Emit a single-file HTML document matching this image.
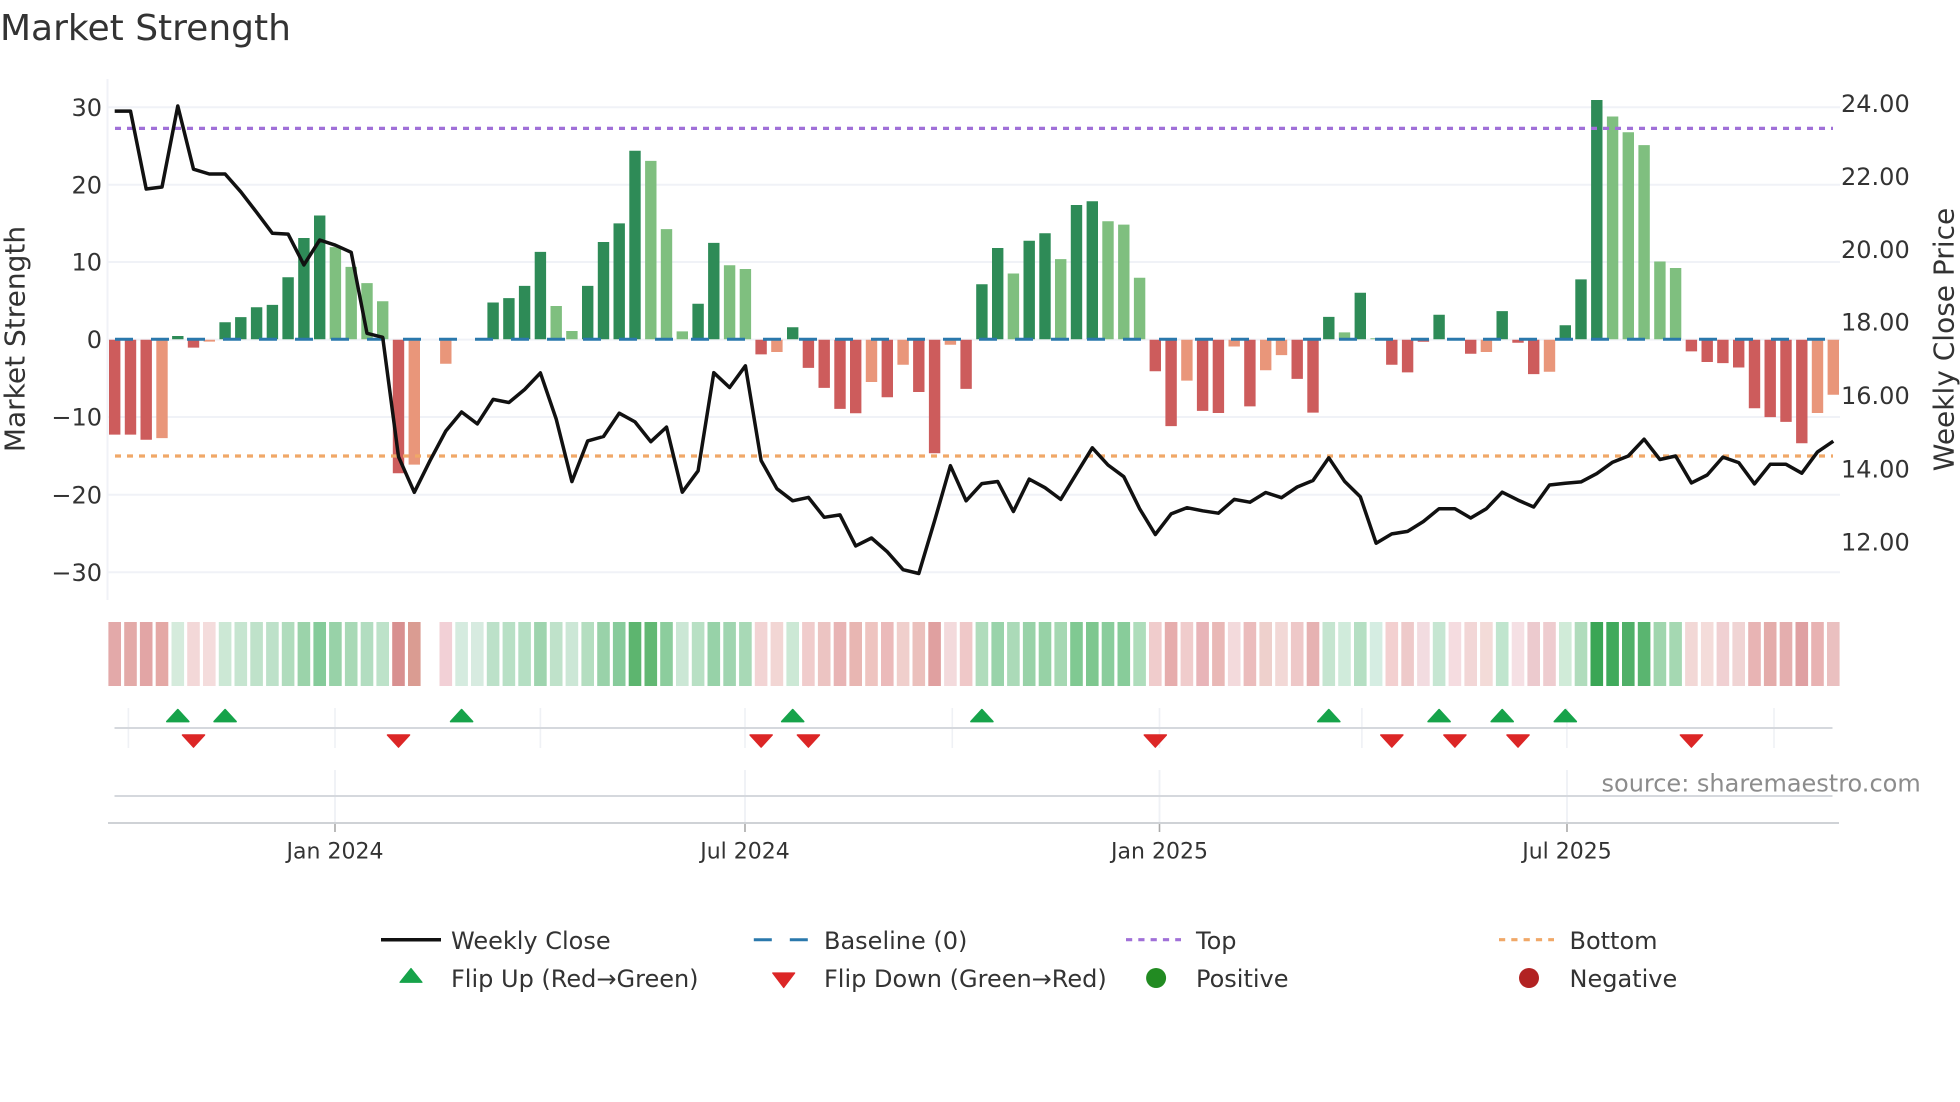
<!DOCTYPE html>
<html lang="en">
<head>
<meta charset="utf-8">
<title>Market Strength</title>
<style>
html,body{margin:0;padding:0;background:#fff;width:1960px;height:1102px;overflow:hidden}
svg{display:block;position:absolute;left:0;top:0}
text{font-family:"DejaVu Sans","Liberation Sans",sans-serif;fill:#333}
.t{font-size:24px}
.x{font-size:22px;text-anchor:middle}
.a{font-size:28px;text-anchor:middle}
</style>
</head>
<body>
<svg width="1960" height="1102" viewBox="0 0 1960 1102" xmlns="http://www.w3.org/2000/svg">
<rect width="1960" height="1102" fill="#fff"/>
<text x="0" y="40" style="font-size:36px">Market Strength</text>

<!-- grid -->
<path d="M107.5 79V600" stroke="#f0f2f7" stroke-width="2" fill="none"/>
<path d="M108 107.2H1840M108 184.7H1840M108 262H1840M108 339.6H1840M108 417H1840M108 494.7H1840M108 572.2H1840" stroke="#f0f2f7" stroke-width="2" fill="none"/>

<!-- bars -->
<path fill="#2e8b57" d="M172.1 339.3V336h11.4V339.3zM219.4 339.3V322.3h11.4V339.3zM235.1 339.3V317.1h11.4V339.3zM250.9 339.3V307.2h11.4V339.3zM266.7 339.3V304.9h11.4V339.3zM282.4 339.3V277.2h11.4V339.3zM298.2 339.3V238h11.4V339.3zM314 339.3V215.5h11.4V339.3zM487.4 339.3V302.5h11.4V339.3zM503.2 339.3V298.1h11.4V339.3zM518.9 339.3V285.9h11.4V339.3zM534.7 339.3V251.9h11.4V339.3zM582 339.3V285.9h11.4V339.3zM597.8 339.3V242h11.4V339.3zM613.5 339.3V223.4h11.4V339.3zM629.3 339.3V150.7h11.4V339.3zM692.4 339.3V303.8h11.4V339.3zM708.1 339.3V242.9h11.4V339.3zM787 339.3V327.2h11.4V339.3zM976.2 339.3V284.2h11.4V339.3zM992 339.3V248h11.4V339.3zM1023.5 339.3V240.8h11.4V339.3zM1039.3 339.3V233.2h11.4V339.3zM1070.8 339.3V205h11.4V339.3zM1086.6 339.3V201.2h11.4V339.3zM1323.1 339.3V316.9h11.4V339.3zM1354.6 339.3V292.8h11.4V339.3zM1433.4 339.3V314.8h11.4V339.3zM1496.5 339.3V311.1h11.4V339.3zM1559.6 339.3V325.2h11.4V339.3zM1575.3 339.3V279.4h11.4V339.3zM1591.1 339.3V100h11.4V339.3z"/>
<path fill="#7fbf7f" d="M329.7 339.3V247.1h11.4V339.3zM345.5 339.3V266.9h11.4V339.3zM361.3 339.3V283.1h11.4V339.3zM377 339.3V301.3h11.4V339.3zM550.5 339.3V306h11.4V339.3zM566.2 339.3V331h11.4V339.3zM645.1 339.3V160.9h11.4V339.3zM660.8 339.3V229.1h11.4V339.3zM676.6 339.3V331.4h11.4V339.3zM723.9 339.3V265.3h11.4V339.3zM739.7 339.3V269h11.4V339.3zM1007.7 339.3V273.5h11.4V339.3zM1055 339.3V259.1h11.4V339.3zM1102.3 339.3V221.2h11.4V339.3zM1118.1 339.3V224.6h11.4V339.3zM1133.9 339.3V277.7h11.4V339.3zM1338.8 339.3V332.4h11.4V339.3zM1370.4 339.3V338.3h11.4V339.3zM1606.9 339.3V116.5h11.4V339.3zM1622.6 339.3V132.3h11.4V339.3zM1638.4 339.3V145.1h11.4V339.3zM1654.2 339.3V261.5h11.4V339.3zM1669.9 339.3V268h11.4V339.3z"/>
<path fill="#cd5c5c" d="M109 339.8V434.6h11.4V339.8zM124.8 339.8V434.6h11.4V339.8zM140.5 339.8V439.7h11.4V339.8zM187.8 339.8V347.6h11.4V339.8zM392.8 339.8V473.3h11.4V339.8zM755.4 339.8V354.4h11.4V339.8zM802.7 339.8V367.9h11.4V339.8zM818.5 339.8V387.9h11.4V339.8zM834.3 339.8V408.9h11.4V339.8zM850 339.8V413.3h11.4V339.8zM881.6 339.8V397.2h11.4V339.8zM913.1 339.8V392h11.4V339.8zM928.9 339.8V453.3h11.4V339.8zM960.4 339.8V388.9h11.4V339.8zM1149.6 339.8V371.3h11.4V339.8zM1165.4 339.8V426.1h11.4V339.8zM1196.9 339.8V410.9h11.4V339.8zM1212.7 339.8V413h11.4V339.8zM1244.2 339.8V406.4h11.4V339.8zM1291.5 339.8V378.9h11.4V339.8zM1307.3 339.8V412.6h11.4V339.8zM1386.1 339.8V364.8h11.4V339.8zM1401.9 339.8V372.4h11.4V339.8zM1417.7 339.8V341.7h11.4V339.8zM1465 339.8V353.8h11.4V339.8zM1512.3 339.8V342.7h11.4V339.8zM1528 339.8V374.1h11.4V339.8zM1685.7 339.8V351.4h11.4V339.8zM1701.5 339.8V362h11.4V339.8zM1717.2 339.8V363.1h11.4V339.8zM1733 339.8V367.5h11.4V339.8zM1748.8 339.8V408.2h11.4V339.8zM1764.5 339.8V417.1h11.4V339.8zM1780.3 339.8V421.9h11.4V339.8zM1796.1 339.8V443.3h11.4V339.8z"/>
<path fill="#e9967a" d="M156.3 339.8V438.1h11.4V339.8zM203.6 339.8V341.6h11.4V339.8zM408.6 339.8V464.6h11.4V339.8zM440.1 339.8V363.8h11.4V339.8zM771.2 339.8V352h11.4V339.8zM865.8 339.8V382h11.4V339.8zM897.4 339.8V364.8h11.4V339.8zM944.7 339.8V344.8h11.4V339.8zM1181.2 339.8V380.6h11.4V339.8zM1228.5 339.8V346.5h11.4V339.8zM1260 339.8V370.3h11.4V339.8zM1275.8 339.8V355.1h11.4V339.8zM1480.7 339.8V352h11.4V339.8zM1543.8 339.8V371.7h11.4V339.8zM1811.8 339.8V413h11.4V339.8zM1827.6 339.8V394.7h11.4V339.8z"/>

<!-- reference lines -->
<path d="M115 339.3H1833" stroke="#2a78ac" stroke-width="3" stroke-dasharray="18 18" fill="none"/>
<path d="M115 128.4H1833" stroke="#a070d8" stroke-width="3.2" stroke-dasharray="6 6" fill="none"/>
<path d="M115 456H1833" stroke="#f0a868" stroke-width="3.2" stroke-dasharray="6 6" fill="none"/>

<!-- weekly close -->
<polyline fill="none" stroke="#111" stroke-width="3.5" stroke-linejoin="round" points="114.7,111.1 130.5,111.1 146.2,189 162,187 177.8,106 193.5,169.2 209.3,174 225.1,174 240.8,191.8 256.6,212.3 272.4,233.3 288.1,234.1 303.9,264.9 319.7,240 335.4,245.2 351.2,252.3 367,333.3 382.7,337.3 398.5,456.7 414.3,492.3 430,460.7 445.8,431 461.6,412 477.3,423.9 493.1,399.4 508.9,402.5 524.6,389.5 540.4,372.9 556.2,419.1 571.9,481.6 587.7,440.9 603.5,436.5 619.2,413.2 635,421.9 650.8,441.7 666.5,427.1 682.3,492.2 698.1,470.8 713.8,372.7 729.6,387.5 745.4,365.8 761.1,460.5 776.9,488.7 792.7,500.8 808.4,497.4 824.2,517.3 840,514.9 855.7,545.9 871.5,538 887.3,551.8 903.1,569.7 918.8,573.5 934.6,520.8 950.4,465.7 966.1,500.8 981.9,483.6 997.7,481.5 1013.4,511.5 1029.2,479.1 1045,487.7 1060.7,499.4 1076.5,473.6 1092.3,447.8 1108,465 1123.8,476.7 1139.6,508.7 1155.3,534.5 1171.1,513.9 1186.9,507.7 1202.6,510.8 1218.4,513.2 1234.2,499.4 1249.9,502.2 1265.7,492.5 1281.5,497.7 1297.2,487 1313,480.5 1328.8,457.8 1344.5,481.2 1360.3,496.7 1376.1,543.2 1391.8,533.9 1407.6,531.4 1423.4,521.5 1439.1,508.7 1454.9,508.7 1470.7,518 1486.4,508.7 1502.2,492.2 1518,500.1 1533.7,507 1549.5,485 1565.3,483.2 1581,481.9 1596.8,473.6 1612.6,462.2 1628.3,456 1644.1,439.2 1659.9,459.5 1675.6,456 1691.4,482.9 1707.2,475 1722.9,457.1 1738.7,462.6 1754.5,483.9 1770.2,464.3 1786,464.3 1801.8,473.2 1817.5,451.9 1833.3,441.2"/>

<!-- left ticks -->
<g class="t" text-anchor="end">
<text x="102" y="115.8">30</text>
<text x="102" y="193.3">20</text>
<text x="102" y="270.6">10</text>
<text x="102" y="348.2">0</text>
<text x="102" y="425.6">−10</text>
<text x="102" y="503.3">−20</text>
<text x="102" y="580.8">−30</text>
</g>
<!-- right ticks -->
<g class="t">
<text x="1841" y="111.8">24.00</text>
<text x="1841" y="185">22.00</text>
<text x="1841" y="258">20.00</text>
<text x="1841" y="330.6">18.00</text>
<text x="1841" y="404">16.00</text>
<text x="1841" y="477.6">14.00</text>
<text x="1841" y="550.6">12.00</text>
</g>
<text class="a" transform="translate(24.5 339) rotate(-90)">Market Strength</text>
<text class="a" transform="translate(1953.5 339.5) rotate(-90)">Weekly Close Price</text>

<!-- heat strip -->
<g>
<path fill="#e3a9a9" d="M108.4 622h12.6v64h-12.6z"/><path fill="#e3aaa8" d="M124.2 622h12.6v64h-12.6z"/><path fill="#e2a5a5" d="M139.9 622h12.6v64h-12.6z"/><path fill="#e4a8a5" d="M155.7 622h12.6v64h-12.6z"/>
<path fill="#d5ebdc" d="M171.5 622h12.6v64h-12.6z"/><path fill="#f3d8d8" d="M187.2 622h12.6v64h-12.6z"/><path fill="#f4dcdc" d="M203 622h12.6v64h-12.6z"/><path fill="#cce8d5" d="M218.8 622h12.6v64h-12.6z"/>
<path fill="#c6e5d0" d="M234.5 622h12.6v64h-12.6z"/><path fill="#bfe2ca" d="M250.3 622h12.6v64h-12.6z"/><path fill="#bde1c9" d="M266.1 622h12.6v64h-12.6z"/><path fill="#b0dcbd" d="M281.8 622h12.6v64h-12.6z"/>
<path fill="#9bd3aa" d="M297.6 622h12.6v64h-12.6z"/><path fill="#85cb9a" d="M313.4 622h12.6v64h-12.6z"/><path fill="#98d2a8" d="M329.1 622h12.6v64h-12.6z"/><path fill="#a8d9b6" d="M344.9 622h12.6v64h-12.6z"/>
<path fill="#b2ddc0" d="M360.7 622h12.6v64h-12.6z"/><path fill="#bde2c9" d="M376.4 622h12.6v64h-12.6z"/><path fill="#d89090" d="M392.2 622h12.6v64h-12.6z"/><path fill="#da9c92" d="M408 622h12.6v64h-12.6z"/>
<path fill="#f2d0d6" d="M439.5 622h12.6v64h-12.6z"/><path fill="#d5ebdf" d="M455.3 622h12.6v64h-12.6z"/><path fill="#d7ebe0" d="M471 622h12.6v64h-12.6z"/><path fill="#bce1c9" d="M486.8 622h12.6v64h-12.6z"/>
<path fill="#b8e0c5" d="M502.6 622h12.6v64h-12.6z"/><path fill="#b5dfc3" d="M518.3 622h12.6v64h-12.6z"/><path fill="#9ed4ae" d="M534.1 622h12.6v64h-12.6z"/><path fill="#bfe2ca" d="M549.9 622h12.6v64h-12.6z"/>
<path fill="#cce7d6" d="M565.6 622h12.6v64h-12.6z"/><path fill="#b4dec0" d="M581.4 622h12.6v64h-12.6z"/><path fill="#99d2a9" d="M597.2 622h12.6v64h-12.6z"/><path fill="#87cb9b" d="M612.9 622h12.6v64h-12.6z"/>
<path fill="#5db56f" d="M628.7 622h12.6v64h-12.6z"/><path fill="#62b873" d="M644.5 622h12.6v64h-12.6z"/><path fill="#8ccd9d" d="M660.2 622h12.6v64h-12.6z"/><path fill="#cbe7d5" d="M676 622h12.6v64h-12.6z"/>
<path fill="#b8e0c4" d="M691.8 622h12.6v64h-12.6z"/><path fill="#97d2a8" d="M707.5 622h12.6v64h-12.6z"/><path fill="#a0d5b0" d="M723.3 622h12.6v64h-12.6z"/><path fill="#a8d9b6" d="M739.1 622h12.6v64h-12.6z"/>
<path fill="#f2d4d4" d="M754.8 622h12.6v64h-12.6z"/><path fill="#f2d6d4" d="M770.6 622h12.6v64h-12.6z"/><path fill="#cce8d5" d="M786.4 622h12.6v64h-12.6z"/><path fill="#f0cccc" d="M802.1 622h12.6v64h-12.6z"/>
<path fill="#ecc4c2" d="M817.9 622h12.6v64h-12.6z"/><path fill="#e8b4b4" d="M833.7 622h12.6v64h-12.6z"/><path fill="#e8b6b2" d="M849.4 622h12.6v64h-12.6z"/><path fill="#eec4c0" d="M865.2 622h12.6v64h-12.6z"/>
<path fill="#ebbaba" d="M881 622h12.6v64h-12.6z"/><path fill="#f0cfcc" d="M896.8 622h12.6v64h-12.6z"/><path fill="#ebc0bc" d="M912.5 622h12.6v64h-12.6z"/><path fill="#e0a0a0" d="M928.3 622h12.6v64h-12.6z"/>
<path fill="#f3dadc" d="M944.1 622h12.6v64h-12.6z"/><path fill="#efc8c8" d="M959.8 622h12.6v64h-12.6z"/><path fill="#b0dcbc" d="M975.6 622h12.6v64h-12.6z"/><path fill="#99d3aa" d="M991.4 622h12.6v64h-12.6z"/>
<path fill="#abdab8" d="M1007.1 622h12.6v64h-12.6z"/><path fill="#98d2a8" d="M1022.9 622h12.6v64h-12.6z"/><path fill="#97d2a6" d="M1038.7 622h12.6v64h-12.6z"/><path fill="#a5d8b2" d="M1054.4 622h12.6v64h-12.6z"/>
<path fill="#80c992" d="M1070.2 622h12.6v64h-12.6z"/><path fill="#7ec78f" d="M1086 622h12.6v64h-12.6z"/><path fill="#8acd9c" d="M1101.7 622h12.6v64h-12.6z"/><path fill="#88cc9a" d="M1117.5 622h12.6v64h-12.6z"/>
<path fill="#aeddbb" d="M1133.3 622h12.6v64h-12.6z"/><path fill="#f0cccc" d="M1149 622h12.6v64h-12.6z"/><path fill="#e6adad" d="M1164.8 622h12.6v64h-12.6z"/><path fill="#f0cccc" d="M1180.6 622h12.6v64h-12.6z"/>
<path fill="#e8b4b8" d="M1196.3 622h12.6v64h-12.6z"/><path fill="#e9b8b6" d="M1212.1 622h12.6v64h-12.6z"/><path fill="#f3dadc" d="M1227.9 622h12.6v64h-12.6z"/><path fill="#ebbcbc" d="M1243.6 622h12.6v64h-12.6z"/>
<path fill="#eed0cc" d="M1259.4 622h12.6v64h-12.6z"/><path fill="#f2d8d6" d="M1275.2 622h12.6v64h-12.6z"/><path fill="#eec8c8" d="M1290.9 622h12.6v64h-12.6z"/><path fill="#e6b2b2" d="M1306.7 622h12.6v64h-12.6z"/>
<path fill="#c5e5d0" d="M1322.5 622h12.6v64h-12.6z"/><path fill="#d0ebdb" d="M1338.2 622h12.6v64h-12.6z"/><path fill="#b5dfc3" d="M1354 622h12.6v64h-12.6z"/><path fill="#d5ede2" d="M1369.8 622h12.6v64h-12.6z"/>
<path fill="#f3d0d0" d="M1385.5 622h12.6v64h-12.6z"/><path fill="#eecaca" d="M1401.3 622h12.6v64h-12.6z"/><path fill="#f2dce0" d="M1417.1 622h12.6v64h-12.6z"/><path fill="#c6e6d2" d="M1432.8 622h12.6v64h-12.6z"/>
<path fill="#f5dce0" d="M1448.6 622h12.6v64h-12.6z"/><path fill="#f2d6d6" d="M1464.4 622h12.6v64h-12.6z"/><path fill="#f3dbd8" d="M1480.1 622h12.6v64h-12.6z"/><path fill="#c0e5ce" d="M1495.9 622h12.6v64h-12.6z"/>
<path fill="#f5e0e4" d="M1511.7 622h12.6v64h-12.6z"/><path fill="#eccace" d="M1527.4 622h12.6v64h-12.6z"/><path fill="#eecccf" d="M1543.2 622h12.6v64h-12.6z"/><path fill="#d0ebd8" d="M1559 622h12.6v64h-12.6z"/>
<path fill="#b0dcbc" d="M1574.7 622h12.6v64h-12.6z"/><path fill="#3aa655" d="M1590.5 622h12.6v64h-12.6z"/><path fill="#40aa5c" d="M1606.3 622h12.6v64h-12.6z"/><path fill="#50b068" d="M1622 622h12.6v64h-12.6z"/>
<path fill="#5ab570" d="M1637.8 622h12.6v64h-12.6z"/><path fill="#a0d6ae" d="M1653.6 622h12.6v64h-12.6z"/><path fill="#a5d8b2" d="M1669.3 622h12.6v64h-12.6z"/><path fill="#f2d8d6" d="M1685.1 622h12.6v64h-12.6z"/>
<path fill="#f4dcda" d="M1700.9 622h12.6v64h-12.6z"/><path fill="#f0d0d2" d="M1716.6 622h12.6v64h-12.6z"/><path fill="#f0d4d4" d="M1732.4 622h12.6v64h-12.6z"/><path fill="#e8b4b4" d="M1748.2 622h12.6v64h-12.6z"/>
<path fill="#e4acaa" d="M1763.9 622h12.6v64h-12.6z"/><path fill="#e4aeae" d="M1779.7 622h12.6v64h-12.6z"/><path fill="#dfa0a2" d="M1795.5 622h12.6v64h-12.6z"/><path fill="#e8b2b2" d="M1811.2 622h12.6v64h-12.6z"/>
<path fill="#eac0c0" d="M1827 622h12.6v64h-12.6z"/>
</g>

<!-- flip panel -->
<path d="M128.4 708V748M335 708V748M540.4 708V748M745 708V748M952.3 708V748M1159.5 708V748M1361.9 708V748M1566.9 708V748M1774 708V748" stroke="#eff1f5" stroke-width="1.6" fill="none"/>
<path d="M114.5 728H1832.5" stroke="#d5d8dd" stroke-width="2" fill="none"/>
<g fill="#16a34a" stroke="#16a34a" stroke-width="1.6" stroke-linejoin="round">
<path d="M177.8 709.6l11 12h-22z"/><path d="M225.1 709.6l11 12h-22z"/><path d="M461.6 709.6l11 12h-22z"/><path d="M792.7 709.6l11 12h-22z"/><path d="M981.9 709.6l11 12h-22z"/><path d="M1328.8 709.6l11 12h-22z"/><path d="M1439.1 709.6l11 12h-22z"/><path d="M1502.2 709.6l11 12h-22z"/><path d="M1565.3 709.6l11 12h-22z"/>
</g>
<g fill="#dc2626" stroke="#dc2626" stroke-width="1.6" stroke-linejoin="round">
<path d="M193.5 747l11 -12h-22z"/><path d="M398.5 747l11 -12h-22z"/><path d="M761.1 747l11 -12h-22z"/><path d="M808.4 747l11 -12h-22z"/><path d="M1155.3 747l11 -12h-22z"/><path d="M1391.8 747l11 -12h-22z"/><path d="M1454.9 747l11 -12h-22z"/><path d="M1518 747l11 -12h-22z"/><path d="M1691.4 747l11 -12h-22z"/>
</g>

<!-- bottom panel -->
<path d="M335 770V823M745 770V823M1159.5 770V823M1567 770V823" stroke="#eff1f5" stroke-width="1.8" fill="none"/>
<path d="M114.5 796H1832.5" stroke="#d5d8dd" stroke-width="2" fill="none"/>
<path d="M108 823H1839" stroke="#cfd2d6" stroke-width="2" fill="none"/>
<path d="M335 824V832M745 824V832M1159.5 824V832M1567 824V832" stroke="#aaa" stroke-width="1.6" fill="none"/>
<text class="x" x="335" y="858.3">Jan 2024</text>
<text class="x" x="745" y="858.3">Jul 2024</text>
<text class="x" x="1159.5" y="858.3">Jan 2025</text>
<text class="x" x="1567" y="858.3">Jul 2025</text>
<text x="1601.5" y="791.7" style="font-size:24px;fill:#8c8c8c">source: sharemaestro.com</text>

<!-- legend -->
<path d="M381 939.7H441" stroke="#111" stroke-width="3.5" fill="none"/>
<path d="M753.8 939.7H808" stroke="#2a78ac" stroke-width="3" stroke-dasharray="18 18" fill="none"/>
<path d="M1126 939.7H1181" stroke="#a070d8" stroke-width="3.2" stroke-dasharray="6.2 6.1" fill="none"/>
<path d="M1499 939.7H1554" stroke="#f0a868" stroke-width="3.2" stroke-dasharray="6.2 6.1" fill="none"/>
<path d="M411 968.5l11 13.8h-22z" fill="#16a34a" stroke="#16a34a" stroke-width="1.2" stroke-linejoin="round"/>
<path d="M783.7 987.5l11 -14.5h-22z" fill="#dc2626" stroke="#dc2626" stroke-width="1.2" stroke-linejoin="round"/>
<circle cx="1156.1" cy="978" r="10" fill="#228b22"/>
<circle cx="1529" cy="978" r="10" fill="#b22222"/>
<g class="t">
<text x="451" y="948.8">Weekly Close</text>
<text x="824" y="948.8">Baseline (0)</text>
<text x="1196" y="948.8">Top</text>
<text x="1569.5" y="948.8">Bottom</text>
<text x="451" y="987">Flip Up (Red→Green)</text>
<text x="824" y="987">Flip Down (Green→Red)</text>
<text x="1196" y="987">Positive</text>
<text x="1569.5" y="987">Negative</text>
</g>
</svg>
</body>
</html>
